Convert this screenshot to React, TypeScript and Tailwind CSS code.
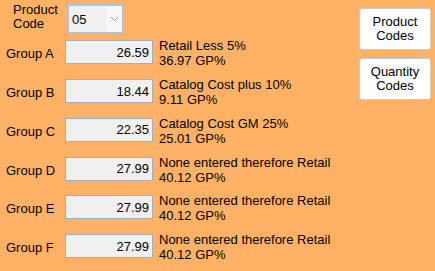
import React from "react";

const rows = [
  { g: "Group A", v: "26.59", d: "Retail Less 5%", p: "36.97 GP%" },
  { g: "Group B", v: "18.44", d: "Catalog Cost plus 10%", p: "9.11 GP%" },
  { g: "Group C", v: "22.35", d: "Catalog Cost GM 25%", p: "25.01 GP%" },
  { g: "Group D", v: "27.99", d: "None entered therefore Retail", p: "40.12 GP%" },
  { g: "Group E", v: "27.99", d: "None entered therefore Retail", p: "40.12 GP%" },
  { g: "Group F", v: "27.99", d: "None entered therefore Retail", p: "40.12 GP%" },
];

export default function App() {
  return (
    <div
      className="w-[435px] h-[271px] bg-[#ffb266] text-[13px] text-black flex overflow-hidden"
      style={{ fontFamily: '"Liberation Sans", Arial, sans-serif' }}
    >
      <div className="flex flex-col">
        <div className="h-[39px] flex items-start">
          <div className="ml-[13px] mt-[3px] w-[54px] leading-[14px]">
            Product
            <br />
            Code
          </div>
          <div className="mt-[4px] w-[57px] h-[30px] border-2 border-[#a9c4e2] bg-[#f0f0f0] flex">
            <div className="flex-1 flex items-center pl-[3px] leading-[15px]">05</div>
            <div className="w-[16px] bg-[#f7f7f7] border-l border-[#fafafa] flex items-center justify-center">
              <svg width="9" height="6" viewBox="0 0 9 6">
                <path d="M1 1 L4.5 4.5 L8 1" fill="none" stroke="#a0a0a0" strokeWidth="1" />
              </svg>
            </div>
          </div>
        </div>
        {rows.map((r) => (
          <div key={r.g} className="h-[39.6px] flex items-start pl-[6px]">
            <div className="w-[59px] mt-[8px] leading-[15px]">{r.g}</div>
            <div className="mt-[2px] w-[88px] h-[24px] border border-[#a6aebb] bg-[#f0f0f0] flex items-center justify-end pr-[3px] leading-[15px]">
              {r.v}
            </div>
            <div className="ml-[6px] leading-[15px] whitespace-nowrap">
              {r.d}
              <br />
              {r.p}
            </div>
          </div>
        ))}
      </div>
      <div className="ml-auto flex flex-col gap-[8px] pt-[8px] pr-[4px]">
        <button className="w-[72px] h-[42px] bg-white border border-[#cccccc] rounded-[3px] leading-[14px] text-center">
          Product
          <br />
          Codes
        </button>
        <button className="w-[72px] h-[42px] bg-white border border-[#cccccc] rounded-[3px] leading-[14px] text-center">
          Quantity
          <br />
          Codes
        </button>
      </div>
    </div>
  );
}
